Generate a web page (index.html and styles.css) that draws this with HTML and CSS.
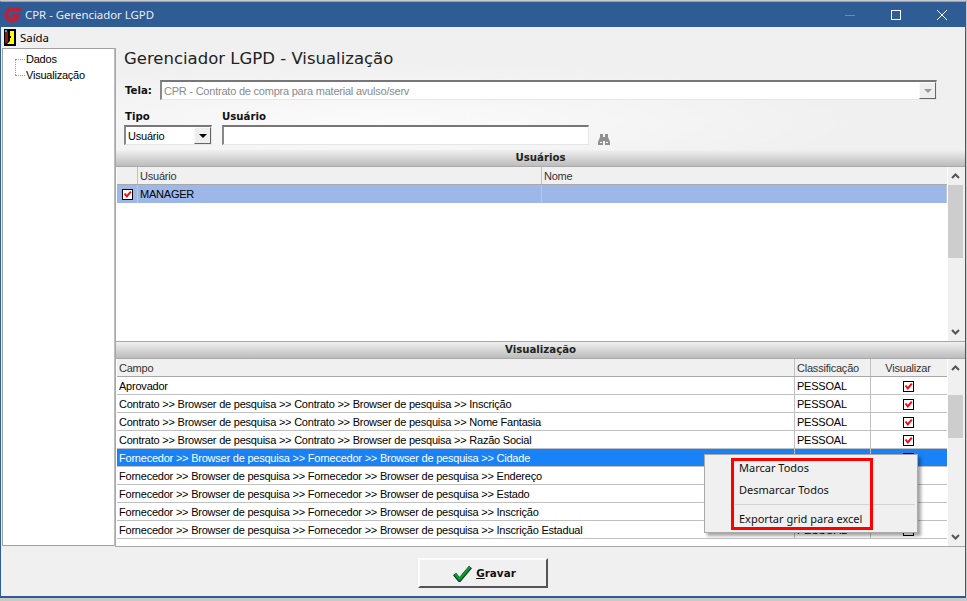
FILE: index.html
```html
<!DOCTYPE html>
<html lang="pt">
<head>
<meta charset="utf-8">
<title>CPR - Gerenciador LGPD</title>
<link rel="stylesheet" href="styles.css">
</head>
<body>
<svg class="defs" width="0" height="0">
  <symbol id="chk" viewBox="0 0 11 11">
    <rect x="0.5" y="0.5" width="10" height="10" fill="#fff" stroke="#000"/>
    <path d="M2.5 4.5 L4.8 7.4 L8.8 2.6" fill="none" stroke="#ee0b16" stroke-width="2"/>
  </symbol>
  <symbol id="up" viewBox="0 0 9 6"><path d="M1 5 L4.5 1.5 L8 5" fill="none" stroke="#555" stroke-width="2"/></symbol>
  <symbol id="down" viewBox="0 0 9 6"><path d="M1 1 L4.5 4.5 L8 1" fill="none" stroke="#555" stroke-width="2"/></symbol>
</svg>
<div class="window">
  <header class="titlebar">
    <svg class="logo" width="18" height="17" viewBox="0 0 18 17">
      <path d="M17 3 H9.5 C5 3 2.4 5.4 2.3 8.6 C2.2 12 4.4 14.6 8 14.6 C11 14.6 13 13 13.6 9.6 H8" fill="none" stroke="#b5243f" stroke-width="4.2"/>
    </svg>
    <span class="title">CPR - Gerenciador LGPD</span>
    <div class="controls">
      <svg width="12" height="12" viewBox="0 0 12 12"><path d="M1 6.5 H11" stroke="#6d8cb4"/></svg>
      <svg width="12" height="12" viewBox="0 0 12 12"><rect x="1.5" y="1.5" width="9" height="9" fill="none" stroke="#fff"/></svg>
      <svg width="12" height="12" viewBox="0 0 12 12"><path d="M1 1 L11 11 M11 1 L1 11" stroke="#fff"/></svg>
    </div>
  </header>
  <nav class="menubar">
    <svg width="12" height="17" viewBox="0 0 12 17">
      <rect width="12" height="17" fill="#000"/>
      <rect x="1" y="1" width="2" height="2" fill="#19c8d8"/>
      <path d="M1 3 H4 V13 L1 15 Z" fill="#8a1c1c"/>
      <path d="M6 2 H10 V15 H3 L6 12 Z" fill="#ffff00"/>
      <rect x="6" y="7" width="1" height="2" fill="#000"/>
    </svg>
    <span>Saída</span>
  </nav>
  <div class="body">
    <aside class="tree">
      <div class="node first">Dados</div>
      <div class="node">Visualização</div>
    </aside>
    <main class="main">
      <div class="top">
        <h1>Gerenciador LGPD - Visualização</h1>
        <div class="tela">
          <label class="lbl">Tela:</label>
          <div class="combo wide disabled">
            <span class="val">CPR - Contrato de compra para material avulso/serv</span>
            <span class="arrowbtn off"></span>
          </div>
        </div>
        <div class="filters">
          <div class="fld">
            <label class="lbl indent">Tipo</label>
            <div class="combo tipo"><span class="val">Usuário</span><span class="arrowbtn"></span></div>
          </div>
          <div class="fld">
            <label class="lbl">Usuário</label>
            <div class="combo user"></div>
          </div>
          <svg class="binoc" width="12" height="11" viewBox="0 0 12 11">
            <path d="M2 0 H5 V3 H7 V0 H10 V3 L12 8 V11 H7 V7 H5 V11 H0 V8 L2 3 Z" fill="#8f8f8f"/>
            <path d="M2 8 H4 V9 H2 Z M8 8 H10 V9 H8 Z" fill="#fff"/>
          </svg>
        </div>
      </div>

      <div class="sect">Usuários</div>
      <section class="gridwrap g1">
        <div class="grid">
          <div class="row head"><div class="c ck"></div><div class="c half">Usuário</div><div class="c half">Nome</div></div>
          <div class="row picked">
            <div class="c ck"><svg class="cb"><use href="#chk"/></svg></div>
            <div class="c half">MANAGER</div><div class="c half"></div>
          </div>
        </div>
        <div class="scroll">
          <svg class="ar" width="9" height="6"><use href="#up"/></svg>
          <div class="track"><div class="thumb t1"></div></div>
          <svg class="ar" width="9" height="6"><use href="#down"/></svg>
        </div>
      </section>

      <div class="sect">Visualização</div>
      <section class="gridwrap g2">
        <div class="grid">
          <div class="row head"><div class="c campo">Campo</div><div class="c cls">Classificação</div><div class="c vis center">Visualizar</div></div>
          <div class="row"><div class="c campo">Aprovador</div><div class="c cls">PESSOAL</div><div class="c vis center"><svg class="cb"><use href="#chk"/></svg></div></div>
          <div class="row"><div class="c campo">Contrato &gt;&gt; Browser de pesquisa &gt;&gt; Contrato &gt;&gt; Browser de pesquisa &gt;&gt; Inscrição</div><div class="c cls">PESSOAL</div><div class="c vis center"><svg class="cb"><use href="#chk"/></svg></div></div>
          <div class="row"><div class="c campo">Contrato &gt;&gt; Browser de pesquisa &gt;&gt; Contrato &gt;&gt; Browser de pesquisa &gt;&gt; Nome Fantasia</div><div class="c cls">PESSOAL</div><div class="c vis center"><svg class="cb"><use href="#chk"/></svg></div></div>
          <div class="row"><div class="c campo">Contrato &gt;&gt; Browser de pesquisa &gt;&gt; Contrato &gt;&gt; Browser de pesquisa &gt;&gt; Razão Social</div><div class="c cls">PESSOAL</div><div class="c vis center"><svg class="cb"><use href="#chk"/></svg></div></div>
          <div class="row sel"><div class="c campo">Fornecedor &gt;&gt; Browser de pesquisa &gt;&gt; Fornecedor &gt;&gt; Browser de pesquisa &gt;&gt; Cidade</div><div class="c cls">PESSOAL</div><div class="c vis center"><div class="blank"></div></div></div>
          <div class="row"><div class="c campo">Fornecedor &gt;&gt; Browser de pesquisa &gt;&gt; Fornecedor &gt;&gt; Browser de pesquisa &gt;&gt; Endereço</div><div class="c cls">PESSOAL</div><div class="c vis center"><div class="blank"></div></div></div>
          <div class="row"><div class="c campo">Fornecedor &gt;&gt; Browser de pesquisa &gt;&gt; Fornecedor &gt;&gt; Browser de pesquisa &gt;&gt; Estado</div><div class="c cls">PESSOAL</div><div class="c vis center"><div class="blank"></div></div></div>
          <div class="row"><div class="c campo">Fornecedor &gt;&gt; Browser de pesquisa &gt;&gt; Fornecedor &gt;&gt; Browser de pesquisa &gt;&gt; Inscrição</div><div class="c cls">PESSOAL</div><div class="c vis center"><div class="blank"></div></div></div>
          <div class="row"><div class="c campo">Fornecedor &gt;&gt; Browser de pesquisa &gt;&gt; Fornecedor &gt;&gt; Browser de pesquisa &gt;&gt; Inscrição Estadual</div><div class="c cls">PESSOAL</div><div class="c vis center"><div class="blank"></div></div></div>
        </div>
        <div class="scroll">
          <svg class="ar" width="9" height="6"><use href="#up"/></svg>
          <div class="track"><div class="thumb t2"></div></div>
          <svg class="ar" width="9" height="6"><use href="#down"/></svg>
        </div>
      </section>
    </main>
  </div>
  <footer class="footer">
    <button class="save">
      <svg width="19" height="17" viewBox="0 0 19 17">
        <path d="M1.5 9 L6.5 15 L17.5 2" fill="none" stroke="#063f3a" stroke-width="4"/>
        <path d="M2 9 L6.5 14.2 L17 2" fill="none" stroke="#12a01e" stroke-width="2.2"/>
      </svg>
      <span><u>G</u>ravar</span>
    </button>
  </footer>
</div>

<div class="menu">
  <div class="mi">Marcar Todos</div>
  <div class="mi">Desmarcar Todos</div>
  <div class="msep"></div>
  <div class="mi">Exportar grid para excel</div>
</div>
<div class="redbox"></div>
</body>
</html>
```
FILE: styles.css
```css
* { box-sizing: border-box; }
html, body { margin: 0; height: 100%; }
body {
  width: 967px; height: 601px; overflow: hidden; position: relative;
  background: #c9c9c9;
  font: 11px "Liberation Sans", sans-serif;
  letter-spacing: -0.22px;
  color: #000;
}
.defs { position: absolute; }
.window {
  width: 966px; height: 597px; margin-top: 1px;
  border: 1px solid #2f5c94; border-top-color: #8ea6c4; border-bottom-width: 2px;
  background: #f0f0f0;
  display: flex; flex-direction: column;
}
.titlebar {
  height: 25px; flex: none; background: #2f5c94; color: #e9eef5;
  display: flex; align-items: center; padding-left: 3px;
  font: 11.4px "Noto Sans", sans-serif; letter-spacing: 0;
}
.logo { margin-right: 3px; }
.controls { margin-left: auto; display: flex; gap: 34px; padding-right: 17px; }
.menubar {
  height: 21px; flex: none; display: flex; align-items: center; gap: 4px; padding-left: 3px;
  font: 11.4px "Noto Sans", sans-serif; letter-spacing: 0;
}
.body { flex: none; height: 499px; display: flex; min-height: 0; }
.tree {
  width: 113px; flex: none; margin-left: 1px; height: 498px;
  background: #fff; border: 1px solid #a0a0a0; border-right-color: #bdbdbd;
  padding: 2px 0 0 23px;
}
.node { height: 16px; line-height: 16px; position: relative; }
.node::before {
  content: ""; position: absolute; left: -11px; top: 8px; width: 10px; border-top: 1px dotted #999;
}
.node.first::after {
  content: ""; position: absolute; left: -11px; top: 8px; height: 16px; border-left: 1px dotted #999;
}
.main {
  flex: 1; min-width: 0; display: flex; flex-direction: column;
  border-left: 1px solid #a8a8a8;
}
.top {
  height: 102px; flex: none; padding: 0 0 0 8px;
  background: radial-gradient(ellipse 480px 60px at 260px 74px, #fbfbfb, #f0f0f0);
}
h1 {
  margin: 0; font: 400 16.5px/20px "DejaVu Sans", sans-serif; letter-spacing: 0; color: #222; height: 22px;
  display: flex; align-items: center;
}
.lbl { font: 700 10.2px/13px "DejaVu Sans", sans-serif; letter-spacing: 0; color: #111; display: block; }
.indent { margin-left: 1px; }
.tela { display: flex; align-items: center; gap: 8px; margin-top: 10px; padding-left: 1px; }
.combo {
  height: 20px; background: #fff; display: flex; align-items: center; justify-content: space-between;
  border: 1px solid #fff; border-top: 2px solid #777; border-left: 2px solid #888;
  border-right-color: #e6e6e6; border-bottom-color: #e6e6e6;
  padding-left: 2px;
}
.wide { width: 777px; }
.disabled .val { color: #8a8a8a; }
.tipo { width: 88px; margin-top: 2px; }
.user { width: 367px; margin-top: 2px; }
.arrowbtn {
  width: 17px; height: 17px; background: #eee; position: relative;
  border: 1px solid; border-color: #fafafa #666 #666 #fafafa;
}
.arrowbtn::after {
  content: ""; position: absolute; left: 4px; top: 6px;
  border: 4px solid transparent; border-top: 4px solid #000; border-bottom: 0;
}
.arrowbtn.off::after { border-top-color: #999; }
.filters { display: flex; align-items: flex-start; gap: 10px; margin-top: 10px; }
.binoc { margin-top: 24px; margin-left: -1px; }
.sect {
  height: 17px; flex: none; text-align: center;
  font: 700 10.2px/15px "DejaVu Sans", sans-serif; letter-spacing: 0; color: #222;
  background: linear-gradient(#f0f0f0, #bcbcbc);
  border-bottom: 1px solid #a9a9a9;
}
.gridwrap { display: flex; flex: none; background: #fff; border-bottom: 1px solid #a8a8a8; padding-left: 1px; }
.g1 { height: 175px; }
.g2 { height: 188px; }
.grid { width: 830px; flex: none; }
.row { display: flex; height: 18px; border-bottom: 1px solid #c0c0c0; line-height: 17px; white-space: nowrap; }
.c { border-right: 1px solid #c0c0c0; padding: 1px 0 0 2px; overflow: hidden; flex: none; height: 17px; }
.head { background: #f0f0f0; border-bottom-color: #a8a8a8; color: #333; }
.ck { width: 21px; padding: 4px 0 0 5px; }
.half { width: 404px; }
.half:last-child { width: 405px; border-right: 0; }
.campo { width: 678px; }
.cls { width: 76px; }
.vis { width: 76px; border-right: 0; }
.center { text-align: center; padding: 1px 2px 0 0; }
.cb, .blank { width: 11px; height: 11px; display: block; }
.center .cb, .center .blank { margin: 3px auto 0; }
.blank { border: 1px solid #000; background: #fff; }
.picked { background: #9db8e8; border-bottom: 0; }
.picked .c { border-right: 1px solid #b8c8e8; height: 18px; }
.sel { background: #1a82f7; color: #fff; }
.scroll {
  width: 18px; flex: none; background: #f0f0f0; display: flex; flex-direction: column; align-items: center;
  border-left: 1px solid #fff; padding-right: 2px;
}
.ar { flex: none; margin: 6px 0; }
.track { flex: 1; width: 100%; position: relative; }
.thumb { position: absolute; left: 0; right: 0; background: #cdcdcd; }
.t1 { top: 0; height: 73px; }
.t2 { top: 18px; height: 43px; }
.footer { flex: 1; display: flex; justify-content: center; align-items: flex-start; padding: 11px 0 0 0; }
.save {
  width: 130px; height: 30px; padding: 0 0 0 4px; margin-right: 1px;
  display: flex; align-items: center; justify-content: center; gap: 4px;
  background: #f0f0f0; border: 2px solid; border-color: #fdfdfd #555 #555 #fdfdfd;
  font: 700 10.4px "DejaVu Sans", sans-serif; letter-spacing: 0; color: #111;
}
.menu {
  position: absolute; left: 704px; top: 454px; width: 214px; height: 79px;
  background: #f0f0f0; border: 1px solid #a8a8a8; box-shadow: 3px 3px 3px rgba(0,0,0,.35);
  padding: 3px 0 0 34px; font: 11px "Noto Sans", sans-serif; letter-spacing: 0;
}
.mi { height: 22px; line-height: 20px; color: #111; }
.msep { height: 1px; background: #d4d4d4; margin: 2px 2px 4px -4px; }
.redbox {
  position: absolute; left: 731px; top: 458px; width: 142px; height: 72px; border: 3px solid #f00;
}
```
